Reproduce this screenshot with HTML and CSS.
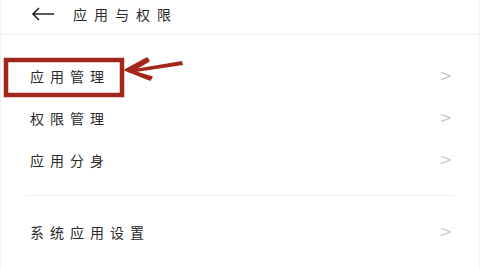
FILE: index.html
```html
<!DOCTYPE html>
<html>
<head>
<title>应用与权限</title>
<meta charset="utf-8">
<link rel="stylesheet" href="styles.css">
</head>
<body>

<div class="page">
    <div class="topbar">
        <svg class="back" width="24" height="14" viewBox="0 0 24 14">
            <path d="M23 7H2M8 1L2 7l6 6" fill="none" stroke="#222" stroke-width="1.6"/>
        </svg>
        <span class="title">应用与权限</span>
    </div>

    <div class="group first">
        <div class="row"><span class="label">应用管理</span><span class="chev">&gt;</span></div>
        <div class="row"><span class="label">权限管理</span><span class="chev">&gt;</span></div>
        <div class="row"><span class="label">应用分身</span><span class="chev">&gt;</span></div>
    </div>

    <div class="group second">
        <div class="row"><span class="label">系统应用设置</span><span class="chev">&gt;</span></div>
    </div>

    <!-- annotation drawn over the screenshot -->
    <svg class="mark" width="200" height="50" viewBox="0 0 200 50">
        <rect x="6" y="10" width="116" height="35" fill="none" stroke="#a3261d" stroke-width="4.5"/>
        <path d="M128 20 L182 11 L183 15 L129 23 Z" fill="#a3261d"/>
        <path d="M125 20 L147 8 L149 11 L132 21 L152 27 L150 30 Z" fill="#a3261d" stroke="#a3261d" stroke-width="1.5" stroke-linejoin="round"/>
    </svg>
</div>

</body>
</html>
```

FILE: styles.css
```css
body {
    margin: 0;
    background-color: white;
    font-family: "Noto Sans CJK SC", "Noto Sans", sans-serif;
    color: #2a2a2a;
}

.page {
    position: relative;
    width: 480px;
    height: 270px;
    overflow: hidden;
    border-left: 1px solid #f3f3f3;
    border-right: 1px solid #f3f3f3;
    box-sizing: border-box;
}

.topbar {
    height: 35px;
    display: flex;
    align-items: center;
    padding-left: 30px;
    border-bottom: 1px solid #f0f0f0;
    box-sizing: border-box;
}

.back {
    margin-top: -6px;
}

.title {
    margin-left: 18px;
    margin-top: -7px;
    font-size: 14px;
    letter-spacing: 7px;
}

.group.first {
    padding-top: 20px;
}

.group.second {
    margin: 14px 24px 0 24px;
    padding-top: 15px;
    border-top: 1px solid #f2f2f2;
}

.row {
    height: 42px;
    display: flex;
    align-items: center;
    justify-content: space-between;
    padding: 0 27px 0 29px;
    font-size: 14px;
}

.group.second .row {
    padding: 0 3px 0 5px;
}

.label {
    letter-spacing: 6px;
}

.chev {
    color: #c9c9c9;
    font-family: "DejaVu Sans", sans-serif;
    font-size: 15px;
}

.mark {
    position: absolute;
    left: -1px;
    top: 50px;
}
```
